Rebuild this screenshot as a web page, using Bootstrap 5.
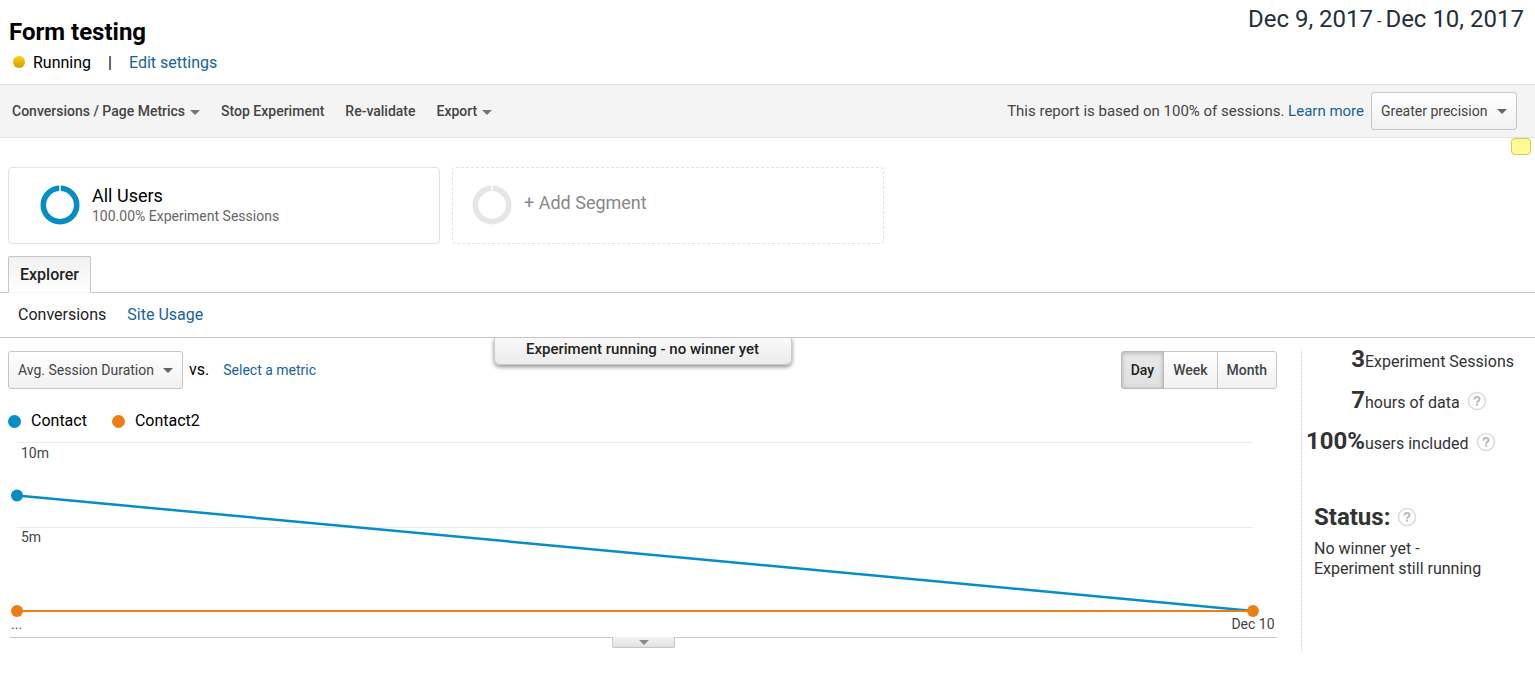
<!DOCTYPE html>
<html lang="en">
<head>
<meta charset="utf-8">
<meta name="viewport" content="width=device-width, initial-scale=1">
<title>Form testing</title>
<link rel="stylesheet" href="https://cdn.jsdelivr.net/npm/bootstrap@5.3.0/dist/css/bootstrap.min.css">
<style>
  body { font-family: Roboto, "Liberation Sans", sans-serif; font-size: 16px; line-height: 20px; color: #000; background: #fff; }
  a { color: #15629c; text-decoration: none; }
  a:hover { text-decoration: underline; }

  .page-head { padding: 6px 11px 11px 9px; }
  .page-title { font-size: 24px; line-height: 28px; font-weight: 700; margin: 12px 0 7px; }
  .date-range { font-size: 24px; line-height: 26px; color: #222f3d; }
  .date-range small { font-size: 16px; }
  .status-dot { width: 12px; height: 12px; border-radius: 50%; background: linear-gradient(#ffcf0a, #d39e00); margin: 0 8px 2px 4px; }
  .divider { padding: 0 17px; }

  .toolbar { background: #f4f4f4; border-top: 1px solid #e2e2e2; border-bottom: 1px solid #e2e2e2; padding: 7px 18px 7px 12px; font-size: 14px; color: #444; }
  .tools { gap: 21px; }
  .tool-btn { border: 0; padding: 0; background: none; color: #444; font-weight: 500; line-height: 20px; }
  .tool-btn.dropdown-toggle::after { margin-left: 5px; vertical-align: 1px; border-width: 5px 5px 0; color: #757575; }
  .report-note { font-size: 15px; margin-right: 7px; }

  .ga-select { appearance: none; height: 38px; border: 1px solid #c6c6c6; border-radius: 3px; padding: 0 28px 0 9px; font-size: 14px; color: #444;
    background: url("data:image/svg+xml,%3Csvg xmlns='http://www.w3.org/2000/svg' width='10' height='5'%3E%3Cpath d='M0 0h10L5 5z' fill='%23666'/%3E%3C/svg%3E") no-repeat right 9px center, linear-gradient(#fff, #f1f1f1); }
  .yellow-chip { position: absolute; right: 4px; top: 0; width: 20px; height: 17px; background: #fffb96; border: 1px solid #dccb45; border-radius: 4px; }

  .segments { padding: 29px 8px 12px; gap: 12px; }
  .segment { flex: 0 1 432px; height: 77px; border: 1px solid #e2e2e2; border-radius: 4px; background: #fff; text-align: left; }
  .segment-all { padding: 0 0 2px 31px; }
  .segment-add { padding: 0 0 2px 19px; border-style: dashed; color: #888; font-size: 18px; }
  .segment-name { font-size: 18px; line-height: 22px; }
  .segment-meta { font-size: 14px; line-height: 18px; color: #666; }

  .tab-bar { border-bottom: 1px solid #c6c6c6; padding: 0 8px; }
  .tab-btn { height: 37px; margin-bottom: -1px; padding: 0 11px; border: 1px solid #c6c6c6; border-bottom-color: #f6f6f6; border-radius: 2px 2px 0 0; background: linear-gradient(#f1f1f1, #fff); font-weight: 500; color: #222; }
  .sub-bar { height: 45px; border-bottom: 1px solid #c6c6c6; padding: 0 18px; gap: 21px; }
  .sub-bar .current { color: #222; }

  .report { padding: 13px 24px 0 8px; }
  .banner { position: absolute; top: 0; left: 50%; transform: translateX(-50%); margin-left: -8px; width: 298px; height: 27px; padding-top: 1px; text-align: center; font-size: 15px; font-weight: 500; color: #222; background: linear-gradient(#fafafa, #ebebeb); border: 1px solid #ccc; border-top: 0; border-radius: 0 0 6px 6px; box-shadow: 0 2px 4px rgba(0,0,0,.45); clip-path: inset(0 -8px -8px); }
  .period .btn { --bs-btn-color: #444; --bs-btn-border-color: #c6c6c6; --bs-btn-font-size: 14px; --bs-btn-line-height: 20px; --bs-btn-padding-x: 9px; --bs-btn-padding-y: 8px; --bs-btn-border-radius: 3px; font-weight: 500; background: linear-gradient(#fff, #f1f1f1); }
  .period .btn-check:checked + .btn { color: #222; border-color: #b8b8b8; background: linear-gradient(#e8e8e8, #e0e0e0); box-shadow: inset 0 1px 4px rgba(0,0,0,.25); }
  .metric-link { font-size: 14px; }
  .versus { margin: 0 14px 0 6px; }

  .legend-row { padding: 22px 0 11px; gap: 25px; }
  .key { width: 13px; height: 13px; border-radius: 50%; margin-right: 10px; }
  .key-a { background: #058dc7; }
  .key-b { background: #ed7e17; }
  .chart { margin: 0 24px 0 9px; }
  .chart svg { display: block; width: 100%; height: 195px; overflow: visible; }
  .chart text { font-size: 14px; fill: #444; }
  .fold { border-top: 1px solid #c6c6c6; margin-left: 2px; }
  .fold-btn { width: 63px; height: 11px; margin-top: -1px; border: 1px solid #c6c6c6; border-top: 0; border-radius: 0 0 2px 2px; background: linear-gradient(#f2f2f2, #e2e2e2); padding: 0; }
  .fold-btn svg { display: block; margin: 0 auto; }

  .facts { flex: 0 0 234px; margin-top: 12px; border-left: 1px dotted #ccc; color: #333; min-height: 301px; }
  .fact { height: 41px; line-height: 18px; }
  .fact-num { flex: 0 0 63px; font-size: 24px; font-weight: 700; text-align: right; white-space: nowrap; }
  .fact-label { line-height: 16px; }
  .status-title { font-size: 24px; line-height: 28px; font-weight: 700; margin: 0; }
  .status-box { padding: 30px 12px 0; }
  .help { border: 0; padding: 0; background: none; margin-left: 7px; line-height: 0; }
</style>
</head>
<body>
<svg width="0" height="0" class="position-absolute" aria-hidden="true">
  <symbol id="help" viewBox="0 0 20 20">
    <circle cx="10" cy="10" r="8.5" fill="#fff" stroke="#dcdcdc" stroke-width="1.6"/>
    <path d="M7.4 8.4C7.4 6.8 8.5 6 10 6s2.6.8 2.6 2.2c0 1.6-2.5 1.7-2.5 3.5" fill="none" stroke="#bbb" stroke-width="2"/>
    <rect x="9.1" y="12.6" width="2" height="2" fill="#bbb"/>
  </symbol>
  <symbol id="ring" viewBox="0 0 40 40">
    <circle cx="20" cy="20" r="16.7" fill="none" stroke="currentColor" stroke-width="5.6"/>
    <path d="M20 0v7" stroke="#fff" stroke-width="1.5"/>
  </symbol>
</svg>

<header class="page-head d-flex justify-content-between align-items-start">
  <div>
    <h1 class="page-title">Form testing</h1>
    <div class="d-flex align-items-center">
      <span class="status-dot"></span><span>Running</span><span class="divider">|</span><a href="#">Edit settings</a>
    </div>
  </div>
  <div class="date-range">Dec 9, 2017<small> - </small>Dec 10, 2017</div>
</header>

<nav class="toolbar d-flex align-items-center justify-content-between" aria-label="Experiment">
  <div class="tools d-flex">
    <button type="button" class="tool-btn dropdown-toggle">Conversions / Page Metrics</button>
    <button type="button" class="tool-btn">Stop Experiment</button>
    <button type="button" class="tool-btn">Re-validate</button>
    <button type="button" class="tool-btn dropdown-toggle">Export</button>
  </div>
  <div class="d-flex align-items-center">
    <span class="report-note">This report is based on 100% of sessions. <a href="#">Learn more</a></span>
    <select class="ga-select" aria-label="Sampling precision"><option>Greater precision</option></select>
  </div>
</nav>

<main>
  <div class="position-relative">
    <span class="yellow-chip"></span>
    <div class="segments d-flex">
      <button type="button" class="segment segment-all d-flex align-items-center">
        <svg width="40" height="40" color="#058dc7" aria-hidden="true"><use href="#ring"/></svg>
        <span class="ms-2 ps-1 d-flex flex-column"><span class="segment-name">All Users</span><span class="segment-meta">100.00% Experiment Sessions</span></span>
      </button>
      <button type="button" class="segment segment-add d-flex align-items-center">
        <svg width="40" height="40" color="#e6e6e6" aria-hidden="true"><use href="#ring"/></svg>
        <span class="ms-2 ps-1 pb-1">+ Add Segment</span>
      </button>
    </div>
  </div>

  <div class="tab-bar d-flex"><button type="button" class="tab-btn">Explorer</button></div>
  <nav class="sub-bar d-flex align-items-center" aria-label="Report">
    <a href="#" class="current">Conversions</a><a href="#">Site Usage</a>
  </nav>

  <div class="d-flex">
    <section class="report position-relative flex-grow-1">
      <div class="banner">Experiment running - no winner yet</div>
      <div class="d-flex align-items-center justify-content-between">
        <div class="d-flex align-items-center">
          <select class="ga-select" aria-label="Metric"><option>Avg. Session Duration</option></select>
          <span class="versus">vs.</span><a href="#" class="metric-link">Select a metric</a>
        </div>
        <div class="period btn-group" role="group" aria-label="Period">
          <input type="radio" class="btn-check" name="period" id="p-day" checked><label class="btn" for="p-day">Day</label>
          <input type="radio" class="btn-check" name="period" id="p-week"><label class="btn" for="p-week">Week</label>
          <input type="radio" class="btn-check" name="period" id="p-month"><label class="btn" for="p-month">Month</label>
        </div>
      </div>
      <div class="legend-row d-flex">
        <span class="d-flex align-items-center"><span class="key key-a"></span>Contact</span>
        <span class="d-flex align-items-center"><span class="key key-b"></span>Contact2</span>
      </div>
      <div class="chart">
        <svg role="img" aria-label="Average session duration by day">
          <line x1="0" x2="100%" y1="0.5" y2="0.5" stroke="#ebebeb"/>
          <line x1="0" x2="100%" y1="85.5" y2="85.5" stroke="#ebebeb"/>
          <text x="4" y="16">10m</text>
          <text x="4" y="100">5m</text>
          <line x1="0" x2="100%" y1="53.5" y2="169" stroke="#058dc7" stroke-width="2.5"/>
          <circle cx="0" cy="53.5" r="6" fill="#058dc7"/>
          <line x1="0" x2="100%" y1="169" y2="169" stroke="#ed7e17" stroke-width="2"/>
          <circle cx="0" cy="169" r="6" fill="#ed7e17"/>
          <circle cx="100%" cy="169" r="6" fill="#ed7e17"/>
          <text x="-6" y="187">...</text>
          <text x="100%" y="187" text-anchor="middle">Dec 10</text>
        </svg>
      </div>
      <div class="fold d-flex justify-content-center">
        <button type="button" class="fold-btn" aria-label="Collapse chart"><svg width="10" height="5" aria-hidden="true"><path d="M0 0h10L5 5z" fill="#888"/></svg></button>
      </div>
    </section>

    <aside class="facts">
      <div class="fact d-flex align-items-baseline"><span class="fact-num">3</span><span class="fact-label">Experiment Sessions</span></div>
      <div class="fact d-flex align-items-baseline"><span class="fact-num">7</span><span class="fact-label">hours of data</span><button type="button" class="help align-self-start" aria-label="Help"><svg width="20" height="20"><use href="#help"/></svg></button></div>
      <div class="fact d-flex align-items-baseline"><span class="fact-num">100%</span><span class="fact-label">users included</span><button type="button" class="help align-self-start" aria-label="Help"><svg width="20" height="20"><use href="#help"/></svg></button></div>
      <div class="status-box">
        <div class="d-flex align-items-center mb-2"><h2 class="status-title">Status:</h2><button type="button" class="help" aria-label="Help"><svg width="20" height="20"><use href="#help"/></svg></button></div>
        <div>No winner yet -<br>Experiment still running</div>
      </div>
    </aside>
  </div>
</main>
<script src="https://cdn.jsdelivr.net/npm/bootstrap@5.3.0/dist/js/bootstrap.bundle.min.js"></script>
</body>
</html>
